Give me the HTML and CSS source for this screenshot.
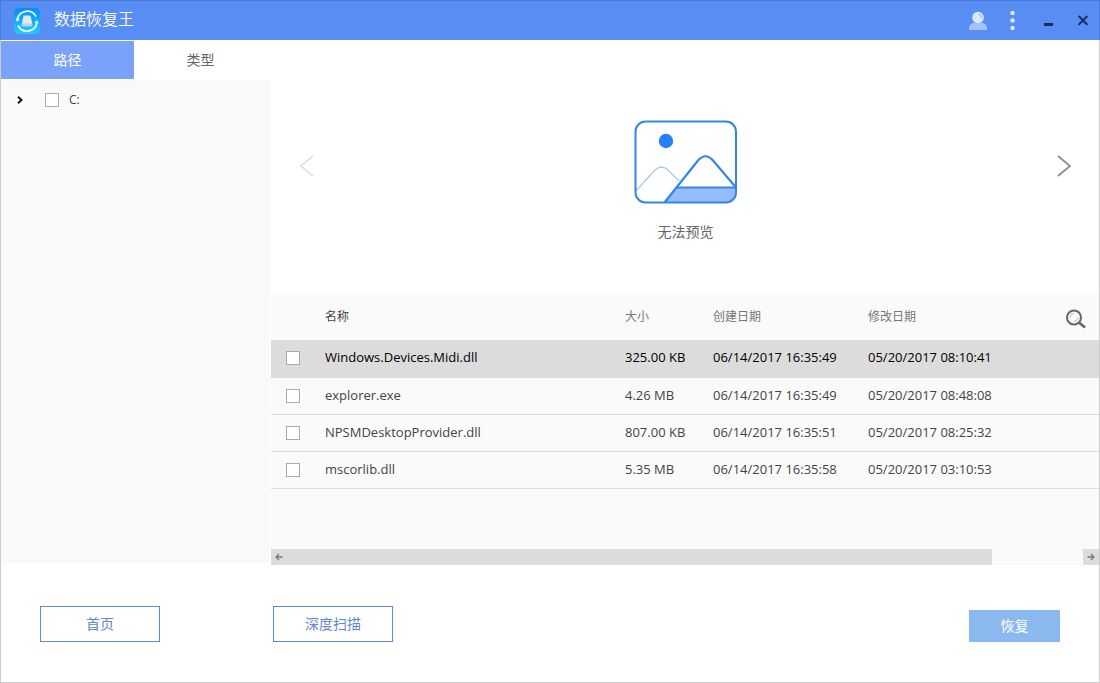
FILE: index.html
```html
<!DOCTYPE html>
<html lang="zh-CN">
<head>
<meta charset="utf-8">
<meta name="viewport" content="width=device-width, initial-scale=1">
<title>数据恢复王</title>
<link rel="stylesheet" href="styles.css">
</head>
<body>
<div class="window">
  <header class="titlebar">
    <svg class="logo" width="26" height="26" viewBox="0 0 26 26" aria-hidden="true">
      <defs>
        <linearGradient id="logo-bg" x1="0" y1="0" x2="0" y2="1">
          <stop offset="0" stop-color="#078bf8"/>
          <stop offset="1" stop-color="#23cdfb"/>
        </linearGradient>
      </defs>
      <rect width="26" height="26" rx="5" fill="url(#logo-bg)"/>
      <path d="M3.400 11A10 10 0 0 1 22 8.600M22.800 15A10 10 0 0 1 4 17.500" fill="none" stroke="#e4f7ff" stroke-width="1.800"/>
      <path d="M1.500 10.500l4.300.4-2.700 3.200zM24.600 15.500l-4.300-.4 2.700-3.200z" fill="#e4f7ff"/>
      <path d="M9.500 7.500h7l1.800 8.500H7.700z" fill="#dfe6f5"/>
      <rect x="7.500" y="15.500" width="11" height="3" rx="1" fill="#b9d4f4"/>
    </svg>
    <h1 class="title">数据恢复王</h1>
    <div class="window-actions">
      <button class="action action-user" aria-label="用户">
        <svg width="20" height="20" viewBox="0 0 20 20">
          <path d="M1 19v-2c0-3 2.500-5 6-5.500h6c3.500.5 6 2.500 6 5.500v2z" fill="#a6c1f8"/>
          <circle cx="10" cy="6.500" r="5.800" fill="#dbe9fe"/>
          <path d="M10.500 3.500a3 3 0 0 1 3 3" fill="none" stroke="#8fb2f5" stroke-width="1.200"/>
        </svg>
      </button>
      <button class="action" aria-label="菜单">
        <svg width="10" height="20" viewBox="0 0 10 20" fill="#deebff">
          <circle cx="4.500" cy="2" r="2.200"/><circle cx="4.500" cy="9.500" r="2.200"/><circle cx="4.500" cy="17" r="2.200"/>
        </svg>
      </button>
      <button class="action" aria-label="最小化">
        <svg width="10" height="20" viewBox="0 0 10 20"><rect x="1" y="12" width="9" height="3" fill="#15305f"/></svg>
      </button>
      <button class="action" aria-label="关闭">
        <svg width="10" height="20" viewBox="0 0 10 20"><path d="M.6 5l8.800 8.800M9.400 5L.6 13.800" stroke="#15305f" stroke-width="2"/></svg>
      </button>
    </div>
  </header>

  <div class="workspace">
    <aside class="sidebar">
      <nav class="tabs">
        <button class="tab tab-active">路径</button>
        <button class="tab">类型</button>
      </nav>
      <div class="tree">
        <div class="tree-item">
          <button class="expander" aria-label="展开">
            <svg width="6" height="8" viewBox="0 0 6 8"><path d="M1 .7L4.500 4 1 7.300" fill="none" stroke="#111" stroke-width="1.900"/></svg>
          </button>
          <input class="check" type="checkbox" id="drive-c">
          <label class="drive" for="drive-c">C:</label>
        </div>
      </div>
    </aside>

    <main class="content">
      <section class="preview">
        <button class="arrow" aria-label="上一个">
          <svg width="16" height="24" viewBox="0 0 16 24"><path d="M14 2L2 12l12 10" fill="none" stroke="#dcdcdc" stroke-width="1.600"/></svg>
        </button>
        <figure class="placeholder">
          <svg width="104" height="84" viewBox="0 0 104 84" fill="none" aria-hidden="true">
            <path d="M43 67.500h59V74q0 8-8 8H31z" fill="#93bdfb"/>
            <path d="M2 71l18.500-20.500q7-7 14 0L45 61" stroke="#a9c9f5" stroke-width="1.300"/>
            <path d="M30.500 82.500L64 40.500q7.500-8.500 15 0L102 67.500" stroke="#3584e8" stroke-width="2.200"/>
            <path d="M42.500 67.500H102" stroke="#3584e8" stroke-width="2"/>
            <rect x="1.500" y="1.500" width="100.500" height="81" rx="10" stroke="#3584e8" stroke-width="2"/>
            <circle cx="32" cy="21" r="7.200" fill="#2680fa"/>
          </svg>
          <figcaption>无法预览</figcaption>
        </figure>
        <button class="arrow" aria-label="下一个">
          <svg width="16" height="24" viewBox="0 0 16 24"><path d="M2 2l12 10L2 22" fill="none" stroke="#8c8c8c" stroke-width="1.800"/></svg>
        </button>
      </section>

      <section class="files">
        <table class="file-table">
          <colgroup>
            <col class="col-check"><col class="col-name"><col class="col-size"><col class="col-created"><col class="col-modified"><col>
          </colgroup>
          <thead>
            <tr>
              <th></th>
              <th class="head-name">名称</th>
              <th>大小</th>
              <th>创建日期</th>
              <th>修改日期</th>
              <th>
                <button class="search" aria-label="搜索">
                  <svg width="22" height="20" viewBox="0 0 22 20" fill="none">
                    <circle cx="9" cy="8.500" r="7" stroke="#666" stroke-width="2"/>
                    <path d="M5 8.500a4 4 0 0 1 4-4M9 12.500a4 4 0 0 0 4-4" stroke="#bbb"/>
                    <path d="M14 13.500l6 5" stroke="#666" stroke-width="2.600"/>
                  </svg>
                </button>
              </th>
            </tr>
          </thead>
          <tbody>
            <tr class="selected">
              <td><input class="check" type="checkbox" id="file-1"></td>
              <td><label for="file-1">Windows.Devices.Midi.dll</label></td>
              <td>325.00 KB</td><td>06/14/2017 16:35:49</td><td>05/20/2017 08:10:41</td><td></td>
            </tr>
            <tr>
              <td><input class="check" type="checkbox" id="file-2"></td>
              <td><label for="file-2">explorer.exe</label></td>
              <td>4.26 MB</td><td>06/14/2017 16:35:49</td><td>05/20/2017 08:48:08</td><td></td>
            </tr>
            <tr>
              <td><input class="check" type="checkbox" id="file-3"></td>
              <td><label for="file-3">NPSMDesktopProvider.dll</label></td>
              <td>807.00 KB</td><td>06/14/2017 16:35:51</td><td>05/20/2017 08:25:32</td><td></td>
            </tr>
            <tr>
              <td><input class="check" type="checkbox" id="file-4"></td>
              <td><label for="file-4">mscorlib.dll</label></td>
              <td>5.35 MB</td><td>06/14/2017 16:35:58</td><td>05/20/2017 03:10:53</td><td></td>
            </tr>
          </tbody>
        </table>
        <div class="scrollbar">
          <button class="scroll-button" aria-label="向左滚动">
            <svg width="8" height="8" viewBox="0 0 8 8"><path d="M7.500 4H1M4 1L1 4l3 3" fill="none" stroke="#777" stroke-width="1.300"/></svg>
          </button>
          <div class="scroll-track"><div class="scroll-thumb"></div></div>
          <button class="scroll-button" aria-label="向右滚动">
            <svg width="8" height="8" viewBox="0 0 8 8"><path d="M.5 4H7M4 1l3 3-3 3" fill="none" stroke="#777" stroke-width="1.300"/></svg>
          </button>
        </div>
      </section>
    </main>
  </div>

  <footer class="footer">
    <button class="button">首页</button>
    <button class="button">深度扫描</button>
    <button class="button button-primary">恢复</button>
  </footer>
</div>
</body>
</html>
```

FILE: styles.css
```css
* {
  box-sizing: border-box;
}

body {
  margin: 0;
  font-family: "Open Sans", "Noto Sans CJK SC", sans-serif;
  font-size: 13px;
  color: #444;
}

button {
  margin: 0;
  padding: 0;
  border: 0;
  background: none;
  color: inherit;
  font: inherit;
}

svg {
  display: block;
}

.window {
  display: flex;
  flex-direction: column;
  min-height: 100vh;
  border: 1px solid #ccc;
  border-top: 0;
  background: #fff;
}

.titlebar {
  display: flex;
  align-items: center;
  height: 40px;
  margin: 0 -1px;
  padding: 0 11px 0 13px;
  border: 1px solid #4a7bdc;
  border-bottom: 0;
  background: #588ef4;
}

.title {
  flex: 1;
  margin: 0 0 3px 14px;
  color: #fff;
  font-size: 16px;
  font-weight: 350;
  line-height: 24px;
}

.window-actions {
  display: flex;
  align-items: center;
  gap: 25px;
}

.action-user {
  margin-right: -5px;
}

.workspace {
  display: flex;
  flex: 1;
}

.sidebar {
  display: flex;
  flex-direction: column;
  width: 270px;
  padding: 1px 1px 2px 0;
}

.tabs {
  display: flex;
  height: 39px;
  padding-right: 3px;
}

.tab {
  flex: 1;
  margin-bottom: 1px;
  padding-bottom: 2px;
  color: #666;
  font-size: 14px;
}

.tab-active {
  background: #7aa2fb;
  color: #fff;
}

.tree {
  flex: 1;
  padding: 10px 16px;
  background: #f9f9f9;
}

.tree-item {
  display: flex;
  align-items: center;
  height: 20px;
}

.expander {
  width: 28px;
}

.check {
  display: block;
  appearance: none;
  width: 14px;
  height: 14px;
  margin: 0;
  border: 1px solid #aaa;
  background: #fff;
}

.check:checked {
  background: #588ef4;
}

.drive {
  margin-left: 10px;
  padding-bottom: 2px;
  font-size: 12px;
}

.content {
  display: flex;
  flex: 1;
  flex-direction: column;
  min-width: 0;
}

.preview {
  display: flex;
  align-items: center;
  justify-content: space-between;
  height: 253px;
  padding: 0 27px 2px 28px;
}

.placeholder {
  display: flex;
  flex-direction: column;
  align-items: center;
  gap: 16px;
  margin: 33px 0 0;
  font-size: 14px;
  line-height: 24px;
  color: #666;
}

.files {
  display: flex;
  flex: 1;
  flex-direction: column;
  background: #fafafa;
}

.file-table {
  width: 100%;
  table-layout: fixed;
  border-collapse: collapse;
}

.col-check {
  width: 54px;
}

.col-name {
  width: 300px;
}

.col-size {
  width: 88px;
}

.col-created,
.col-modified {
  width: 155px;
}

.file-table th,
.file-table td {
  padding: 0 0 2px;
  text-align: left;
  white-space: nowrap;
}

.file-table th {
  height: 47px;
  color: #777;
  font-size: 12px;
  font-weight: 400;
}

.file-table .head-name {
  color: #444;
}

.search {
  display: block;
  margin: 6px 12px 0 auto;
}

.file-table td {
  height: 37px;
  border-bottom: 1px solid #dcdcdc;
}

.file-table td .check {
  margin: 2px 0 0 15px;
}

.selected {
  background: #dcdcdc;
  color: #000;
}

.scrollbar {
  display: flex;
  height: 16px;
  margin-top: auto;
}

.scroll-button {
  display: flex;
  align-items: center;
  justify-content: center;
  width: 16px;
  background: #dcdcdc;
}

.scroll-track {
  flex: 1;
}

.scroll-thumb {
  width: 88.6%;
  height: 100%;
  background: #dcdcdc;
}

.footer {
  display: flex;
  align-items: center;
  height: 117px;
  padding: 0 39px;
}

.button {
  width: 120px;
  height: 36px;
  padding-bottom: 2px;
  border: 1px solid #6489d4;
  color: #5f86d8;
  font-size: 14px;
}

.button + .button {
  margin-left: 113px;
}

.footer .button-primary {
  width: 91px;
  height: 32px;
  margin-top: 4px;
  margin-left: auto;
  border: 0;
  background: #8bb8ef;
  color: #fff;
}
```
